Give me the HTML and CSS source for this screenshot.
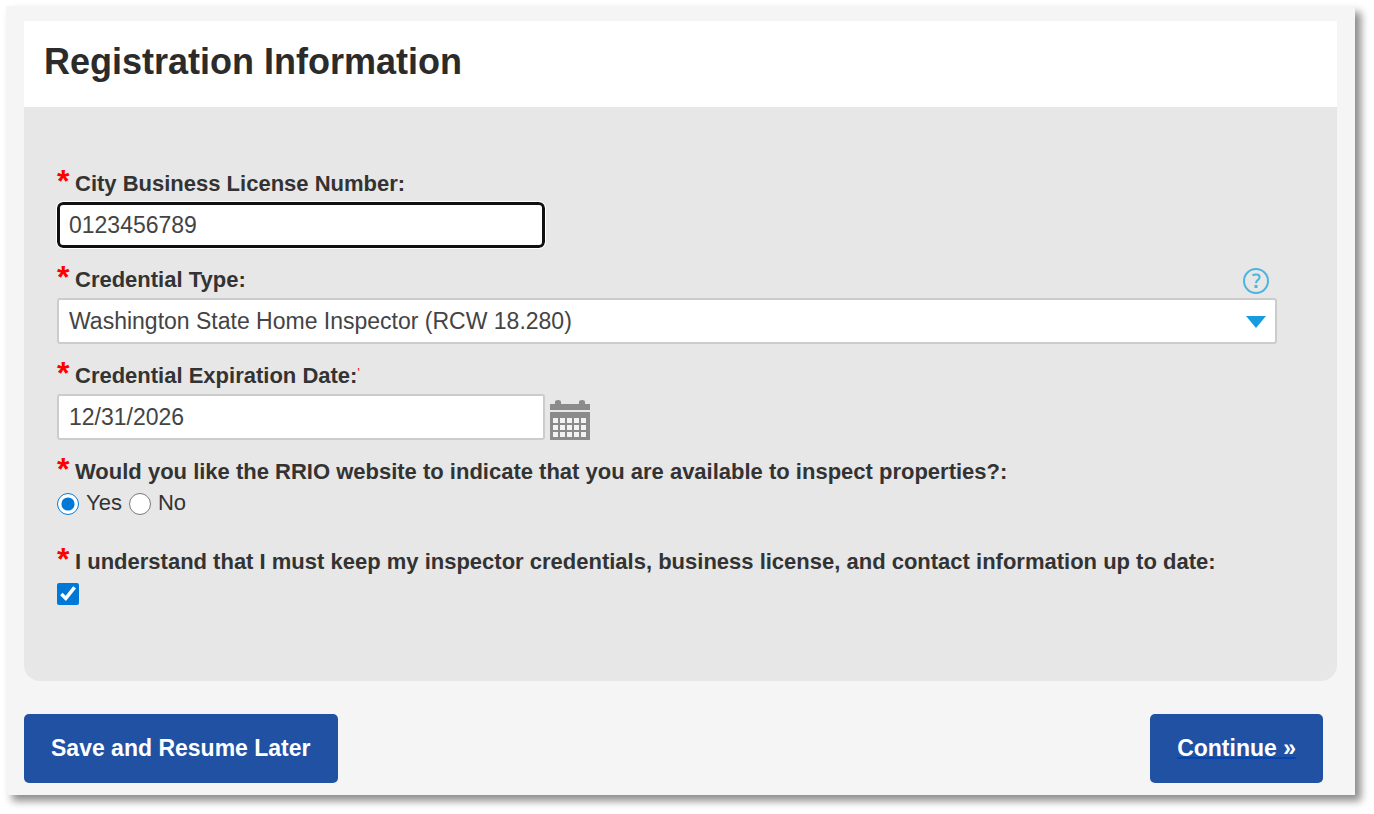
FILE: index.html
```html
<!DOCTYPE html>
<html lang="en">
<head>
    <meta charset="UTF-8">
    <meta name="viewport" content="width=device-width, initial-scale=1.0">
    <title>Registration Information</title>
    <link rel="stylesheet" href="styles.css">
</head>
<body>
    <form class="page">
        <header class="section-title">
            <h1>Registration Information</h1>
        </header>

        <main class="section-body">
            <div class="field">
                <div class="label-row">
                    <span class="required">*</span>
                    <label for="licenseNumber">City Business License Number:</label>
                </div>
                <input type="text" id="licenseNumber" class="text-box active" value="0123456789">
            </div>

            <div class="field">
                <div class="label-row">
                    <span class="required">*</span>
                    <label for="credentialType">Credential Type:</label>
                    <button type="button" class="help-button" aria-label="Help">
                        <svg width="28" height="28" viewBox="0 0 28 28" fill="none" stroke="#4fb3e0">
                            <circle cx="14" cy="15" r="12" stroke-width="2"/>
                            <path d="M10.5 9.5C12 8.2 17.6 7.6 17.6 11.2C17.6 14 14 13.8 14 17.2" stroke-width="2"/>
                            <path d="M14 19V22" stroke-width="3"/>
                        </svg>
                    </button>
                </div>
                <div class="select-wrap">
                    <select id="credentialType" class="text-box">
                        <option>Washington State Home Inspector (RCW 18.280)</option>
                    </select>
                    <svg class="arrow" width="20" height="12" viewBox="0 0 20 12">
                        <path d="M0 0H20L10 12Z" fill="#189ce0"/>
                    </svg>
                </div>
            </div>

            <div class="field">
                <div class="label-row">
                    <span class="required">*</span>
                    <label for="expirationDate">Credential Expiration Date:</label>
                    <span class="mark">'</span>
                </div>
                <div class="date-row">
                    <input type="text" id="expirationDate" class="text-box" value="12/31/2026">
                    <button type="button" class="calendar-button" aria-label="Choose date">
                        <svg width="40" height="40" viewBox="0 0 40 40" fill="#8b8b8b">
                            <path d="M0 4H5V2Q5 0 8 0Q11 0 11 2V4H29V2Q29 0 32 0Q35 0 35 2V4H40V10H0Z"/>
                            <path d="M0 12H40V40H0Z"/>
                            <path fill="#f2f2f2" d="M3 18h5v5h-5zM10 18h5v5h-5zM17 18h5v5h-5zM24 18h5v5h-5zM31 18h5v5h-5zM3 25h5v5h-5zM10 25h5v5h-5zM17 25h5v5h-5zM24 25h5v5h-5zM31 25h5v5h-5zM3 32h5v5h-5zM10 32h5v5h-5zM17 32h5v5h-5zM24 32h5v5h-5zM31 32h5v5h-5z"/>
                        </svg>
                    </button>
                </div>
            </div>

            <fieldset class="field">
                <legend class="label-row">
                    <span class="required">*</span>
                    <span>Would you like the RRIO website to indicate that you are available to inspect properties?:</span>
                </legend>
                <div class="option-row">
                    <input type="radio" id="availableYes" name="available" checked>
                    <label for="availableYes">Yes</label>
                    <input type="radio" id="availableNo" name="available">
                    <label for="availableNo">No</label>
                </div>
            </fieldset>

            <div class="field agreement">
                <div class="label-row">
                    <span class="required">*</span>
                    <label for="agree">I understand that I must keep my inspector credentials, business license, and contact information up to date:</label>
                </div>
                <div class="option-row">
                    <input type="checkbox" id="agree" checked>
                </div>
            </div>
        </main>

        <footer class="actions">
            <button type="button">Save and Resume Later</button>
            <button type="submit" class="continue"><span>Continue »</span></button>
        </footer>
    </form>
</body>
</html>
```
FILE: styles.css
```css
* {
    box-sizing: border-box;
}

body {
    margin: 0;
    padding: 6px 19px 19px 6px;
    background-color: white;
    color: #333;
    font-family: "Liberation Sans", Arial, sans-serif;
    font-size: 23px;
}

.page {
    padding: 15px 18px 12px;
    background-color: #f5f5f5;
    box-shadow: 6px 6px 8px rgba(0, 0, 0, 0.45);
}

.section-title {
    padding: 21px 20px 25px;
    background-color: white;
}

.section-title h1 {
    margin: 0;
    font-size: 36px;
    line-height: 40px;
    color: #2b2b2b;
}

.section-body {
    display: flex;
    flex-direction: column;
    gap: 18px;
    padding: 63px 60px 73px 33px;
    background-color: #e7e7e7;
    border-radius: 0 0 16px 16px;
}

.field {
    margin: 0;
    padding: 0;
    border: none;
    min-width: 0;
}

.label-row {
    display: flex;
    align-items: center;
    height: 28px;
    margin-bottom: 4px;
    padding: 0;
    font-size: 22px;
    font-weight: bold;
}

.required {
    align-self: flex-start;
    width: 18px;
    color: red;
    font-size: 32px;
    line-height: 22px;
}

.mark {
    align-self: flex-start;
    padding-top: 4px;
    color: red;
    font-size: 12px;
    font-weight: normal;
}

.text-box {
    width: 40%;
    height: 46px;
    padding: 0 10px;
    background-color: white;
    border: 2px solid #ccc;
    border-radius: 3px;
    color: #444;
    font-family: inherit;
    font-size: 23px;
}

.text-box.active {
    display: block;
    padding: 0 9px;
    border: 3px solid #101010;
    border-radius: 6px;
    outline: 1px solid white;
}

.help-button,
.calendar-button {
    display: flex;
    padding: 0;
    background: none;
    border: none;
    cursor: pointer;
}

.help-button {
    margin-left: auto;
    margin-right: 7px;
}

.select-wrap {
    position: relative;
}

.select-wrap .text-box {
    display: block;
    width: 100%;
    appearance: none;
}

.arrow {
    position: absolute;
    top: 18px;
    right: 11px;
    pointer-events: none;
}

.date-row {
    display: flex;
    align-items: flex-end;
    gap: 5px;
}

.option-row {
    display: flex;
    align-items: center;
    height: 28px;
    font-size: 22px;
}

.option-row input {
    width: 22px;
    height: 22px;
    margin: 0;
    accent-color: #0078d7;
}

.option-row label {
    margin: 0 7px 2px;
}

.agreement {
    margin-top: 12px;
}

.actions {
    display: flex;
    justify-content: space-between;
    padding: 33px 14px 0 0;
}

.actions button {
    height: 69px;
    padding: 0 27px;
    background-color: #2151a3;
    border: none;
    border-radius: 5px;
    color: white;
    font-family: inherit;
    font-size: 23px;
    font-weight: bold;
    cursor: pointer;
}

.continue span {
    text-decoration: underline #0645ad 2px;
}
```
